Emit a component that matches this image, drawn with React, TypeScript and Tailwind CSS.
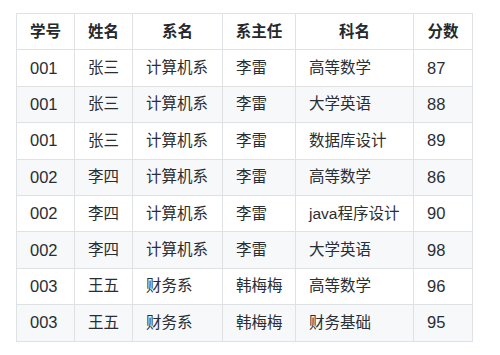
import React from "react";

const rows = [
  ["001", "张三", "计算机系", "李雷", "高等数学", "87"],
  ["001", "张三", "计算机系", "李雷", "大学英语", "88"],
  ["001", "张三", "计算机系", "李雷", "数据库设计", "89"],
  ["002", "李四", "计算机系", "李雷", "高等数学", "86"],
  ["002", "李四", "计算机系", "李雷", "java程序设计", "90"],
  ["002", "李四", "计算机系", "李雷", "大学英语", "98"],
  ["003", "王五", "财务系", "韩梅梅", "高等数学", "96"],
  ["003", "王五", "财务系", "韩梅梅", "财务基础", "95"],
];

const headers = ["学号", "姓名", "系名", "系主任", "科名", "分数"];
const widths = ["w-[58px]", "w-[58px]", "w-[90px]", "w-[73px]", "w-[118px]", "w-[59px]"];

export default function App() {
  return (
    <div
      className="w-[500px] h-[355px] bg-white pt-[13px] pl-[16px] text-[#24292e]"
      style={{ fontFamily: '"Liberation Sans", "Noto Sans CJK SC", sans-serif' }}
    >
      <table className="border-collapse table-fixed w-[457px] text-[15.5px] leading-[24px]">
        <colgroup>
          {widths.map((w, i) => (
            <col key={i} className={w} />
          ))}
        </colgroup>
        <thead>
          <tr className="bg-white">
            {headers.map((h) => (
              <th
                key={h}
                className="border border-[#dfe2e5] h-[36.4px] px-0 py-0 font-semibold text-center whitespace-nowrap"
              >
                {h}
              </th>
            ))}
          </tr>
        </thead>
        <tbody>
          {rows.map((r, i) => (
            <tr key={i} className={i % 2 === 1 ? "bg-[#f6f8fa]" : "bg-white"}>
              {r.map((c, j) => (
                <td
                  key={j}
                  className="border border-[#dfe2e5] h-[36.4px] pl-[13px] pr-0 py-0 text-left whitespace-nowrap text-[#2a2e33]"
                >
                  <span className={/^\d+$/.test(c) ? "text-[16.5px]" : ""}>{c}</span>
                </td>
              ))}
            </tr>
          ))}
        </tbody>
      </table>
    </div>
  );
}
